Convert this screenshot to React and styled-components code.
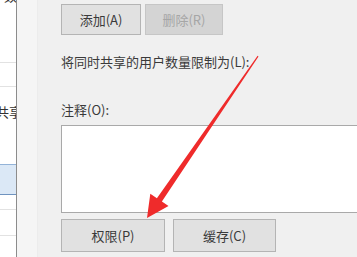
import React from "react";
import styled, { createGlobalStyle } from "styled-components";

const Global = createGlobalStyle`
  html, body { margin: 0; padding: 0; background: #f0f0f0; }
  #root { width: 357px; height: 257px; }
`;

const Page = styled.div`
  position: relative;
  width: 357px;
  height: 257px;
  overflow: hidden;
  display: flex;
  background: #f0f0f0;
  font-family: "Noto Sans CJK SC", "Noto Sans", sans-serif;
  font-size: 13px;
  color: #3a3a3a;
`;

const ListPane = styled.div`
  width: 16px;
  flex: none;
  background: #ffffff;
  display: flex;
  flex-direction: column;
  overflow: hidden;
`;

const ListRow = styled.div`
  flex: none;
  height: ${(p) => p.$h}px;
  box-sizing: border-box;
  overflow: hidden;
  border-bottom: ${(p) => (p.$line ? "1px solid #e2e2e2" : "none")};
  background: ${(p) => (p.$selected ? "#dbe8f6" : "transparent")};
  border-top: ${(p) => (p.$selected ? "1px solid #93b3d8" : "none")};
  ${(p) => p.$selected && "border-bottom: 1px solid #6f93bf;"}
  padding-top: ${(p) => p.$pt || 0}px;
  white-space: nowrap;
  line-height: 17px;
`;

const ClipText = styled.div`
  margin-left: ${(p) => p.$ml ?? -4}px;
  margin-top: ${(p) => p.$mt ?? 0}px;
  color: #333;
  white-space: nowrap;
`;

const Divider = styled.div`
  width: 1px;
  flex: none;
  background: #8c8c8c;
`;

const Gutter = styled.div`
  width: 20px;
  flex: none;
  background: #f5f5f5;
  border-right: 1px solid #ececec;
`;

const Content = styled.div`
  flex: 1;
  min-width: 0;
  padding: 4px 0 0 23px;
  display: flex;
  flex-direction: column;
`;

const ButtonRow = styled.div`
  display: flex;
  gap: ${(p) => p.$gap}px;
  margin-top: ${(p) => p.$mt || 0}px;
`;

const Button = styled.div`
  width: ${(p) => p.$w}px;
  height: ${(p) => p.$h}px;
  box-sizing: border-box;
  display: flex;
  align-items: center;
  justify-content: center;
  background: ${(p) => (p.$disabled ? "#d4d4d4" : "#e1e1e1")};
  border: 1px solid ${(p) => (p.$disabled ? "#c6c6c6" : "#b4b4b4")};
  color: ${(p) => (p.$disabled ? "#a6a6a6" : "#3a3a3a")};
  font-size: 13px;
  line-height: 17px;
`;

const Label = styled.div`
  margin-top: ${(p) => p.$mt}px;
  line-height: 17px;
  height: 17px;
  white-space: nowrap;
`;

const Memo = styled.div`
  margin-top: 7px;
  width: 320px;
  height: 88px;
  box-sizing: border-box;
  background: #ffffff;
  border: 1px solid #a9a9a9;
`;

const Overlay = styled.svg`
  position: absolute;
  left: 0;
  top: 0;
  pointer-events: none;
`;

export default function App() {
  return (
    <>
      <Global />
      <Page>
        <ListPane>
          <ListRow $h={63} $line>
            <ClipText $ml={4} $mt={-13}>数</ClipText>
          </ListRow>
          <ListRow $h={24} $line />
          <ListRow $h={77} $pt={16}>
            <ClipText>共享</ClipText>
          </ListRow>
          <ListRow $h={31} $selected />
          <ListRow $h={15} $line />
          <ListRow $h={26} $line />
          <ListRow $h={30} />
        </ListPane>
        <Divider />
        <Gutter />
        <Content>
          <ButtonRow $gap={4}>
            <Button $w={80} $h={31}>添加(A)</Button>
            <Button $w={78} $h={31} $disabled>删除(R)</Button>
          </ButtonRow>
          <Label $mt={18}>将同时共享的用户数量限制为(L):</Label>
          <Label $mt={31}>注释(O):</Label>
          <Memo />
          <ButtonRow $gap={8} $mt={6}>
            <Button $w={104} $h={33}>权限(P)</Button>
            <Button $w={103} $h={33}>缓存(C)</Button>
          </ButtonRow>
        </Content>
        <Overlay width="357" height="257" viewBox="0 0 357 257">
          <polygon
            fill="#ef2b2b"
            points="258.5,56.4 161.9,201.6 168.5,206.1 147,218 150.3,193.7 156.9,198.2 257.6,55.7"
          />
        </Overlay>
      </Page>
    </>
  );
}
